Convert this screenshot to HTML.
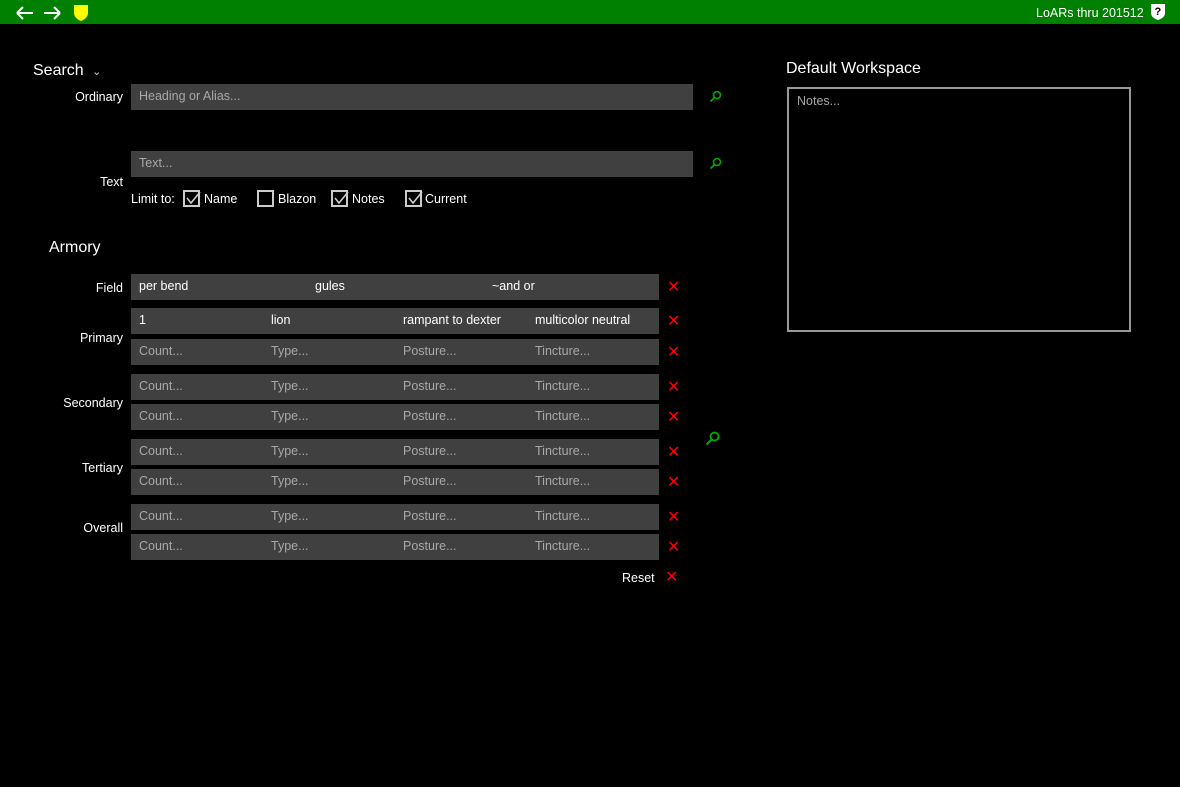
<!DOCTYPE html>
<html><head><meta charset="utf-8"><style>
*{margin:0;padding:0;box-sizing:border-box}
body{width:1180px;height:787px;background:#000;color:#fff;font-family:"Liberation Sans",sans-serif;font-size:12.5px;position:relative;overflow:hidden}
.a{position:absolute;white-space:nowrap}
.bar{position:absolute;left:0;top:0;width:1180px;height:24px;background:#008000}
.in{position:absolute;background:#404040;height:26px}
.ph{color:#a8a8a8}
.t{position:absolute;top:5px}
.x{position:absolute;color:#f00;font-size:16px;line-height:17px}
.lbl{position:absolute;text-align:right;width:120px;left:3px}
.cb{position:absolute;width:17px;height:17px;border:2px solid #ccc}
</style></head><body>
<div class="bar"></div>
<svg class="a" style="left:14px;top:4px" width="80" height="18" viewBox="0 0 80 18">
<path d="M3 9H19M3 9L9 3M3 9L9 15" stroke="#fff" stroke-width="2" fill="none"/>
<path d="M46 9H30M46 9L40 3M46 9L40 15" stroke="#fff" stroke-width="2" fill="none"/>
<path d="M60 1H74V9C74 13 70 16 67 17C64 16 60 13 60 9Z" fill="#ff0"/>
</svg>
<div class="a" style="left:1036px;top:6px;font-size:12.5px">LoARs thru 201512</div>
<svg class="a" style="left:1150px;top:3px" width="16" height="18"><path d="M1 1H15V10C15 14 11 16 8 17C5 16 1 14 1 10Z" fill="#fff"/><text x="4.5" y="12" font-size="11" font-weight="bold" fill="#000" font-family="Liberation Sans">?</text></svg>

<div class="a" style="left:33px;top:62px;font-size:16px">Search <span style="font-size:11px;color:#ccc;margin-left:4px">&#8964;</span></div>
<div class="lbl" style="top:90px">Ordinary</div>
<div class="in" style="left:131px;top:84px;width:562px"><span class="t ph" style="left:8px">Heading or Alias...</span></div>
<div class="in" style="left:131px;top:151px;width:562px"><span class="t ph" style="left:8px">Text...</span></div>
<svg class="a" style="left:709px;top:90px" width="13" height="13"><circle cx="8" cy="5" r="3.5" stroke="#0a0" stroke-width="1.6" fill="none"/><path d="M5.5 7.5L1.5 11.5" stroke="#0a0" stroke-width="1.8"/></svg>
<svg class="a" style="left:709px;top:157px" width="13" height="13"><circle cx="8" cy="5" r="3.5" stroke="#0a0" stroke-width="1.6" fill="none"/><path d="M5.5 7.5L1.5 11.5" stroke="#0a0" stroke-width="1.8"/></svg>
<div class="lbl" style="top:175px">Text</div>
<div class="a" style="left:131px;top:192px">Limit to:</div>
<div class="cb" style="left:183px;top:190px"></div><svg class="a" style="left:183px;top:188px" width="20" height="20"><path d="M4 10L8 15L17 4" stroke="#ccc" stroke-width="1.6" fill="none"/></svg>
<div class="a" style="left:204px;top:192px">Name</div>
<div class="cb" style="left:257px;top:190px"></div>
<div class="a" style="left:278px;top:192px">Blazon</div>
<div class="cb" style="left:331px;top:190px"></div><svg class="a" style="left:331px;top:188px" width="20" height="20"><path d="M4 10L8 15L17 4" stroke="#ccc" stroke-width="1.6" fill="none"/></svg>
<div class="a" style="left:352px;top:192px">Notes</div>
<div class="cb" style="left:405px;top:190px"></div><svg class="a" style="left:405px;top:188px" width="20" height="20"><path d="M4 10L8 15L17 4" stroke="#ccc" stroke-width="1.6" fill="none"/></svg>
<div class="a" style="left:425px;top:192px">Current</div>

<div class="a" style="left:49px;top:239px;font-size:16px">Armory</div>
<div class="lbl" style="top:281px">Field</div>
<div class="lbl" style="top:331px">Primary</div>
<div class="lbl" style="top:396px">Secondary</div>
<div class="lbl" style="top:461px">Tertiary</div>
<div class="lbl" style="top:521px">Overall</div>

<div class="in" style="left:131px;top:274px;width:528px"><span class="t" style="left:8px">per bend</span><span class="t" style="left:184px">gules</span><span class="t" style="left:361px">~and or</span></div>
<div class="in" style="left:131px;top:308px;width:528px"><span class="t" style="left:8px">1</span><span class="t" style="left:140px">lion</span><span class="t" style="left:272px">rampant to dexter</span><span class="t" style="left:404px">multicolor neutral</span></div>
<div id="rows"></div>
<script>
var tops=[339,374,404,439,469,504,534],h='';
tops.forEach(function(t){h+='<div class="in" style="left:131px;top:'+t+'px;width:528px"><span class="t ph" style="left:8px">Count...</span><span class="t ph" style="left:140px">Type...</span><span class="t ph" style="left:272px">Posture...</span><span class="t ph" style="left:404px">Tincture...</span></div>';});
[274,308].concat(tops).forEach(function(t){h+='<div class="x" style="left:667px;top:'+(t+5)+'px">&#10005;</div>';});
document.getElementById('rows').outerHTML=h;
</script>
<svg class="a" style="left:705px;top:431px" width="15" height="15"><circle cx="9.5" cy="5.5" r="4" stroke="#0a0" stroke-width="1.8" fill="none"/><path d="M6.5 8.5L1.5 13.5" stroke="#0a0" stroke-width="2"/></svg>
<div class="a" style="left:622px;top:571px">Reset</div>
<div class="x" style="left:665px;top:569px">&#10005;</div>

<div class="a" style="left:786px;top:60px;font-size:16px">Default Workspace</div>
<div class="a" style="left:787px;top:87px;width:344px;height:245px;border:2px solid #999"><span class="ph" style="position:absolute;left:8px;top:5px">Notes...</span></div>
</body></html>
